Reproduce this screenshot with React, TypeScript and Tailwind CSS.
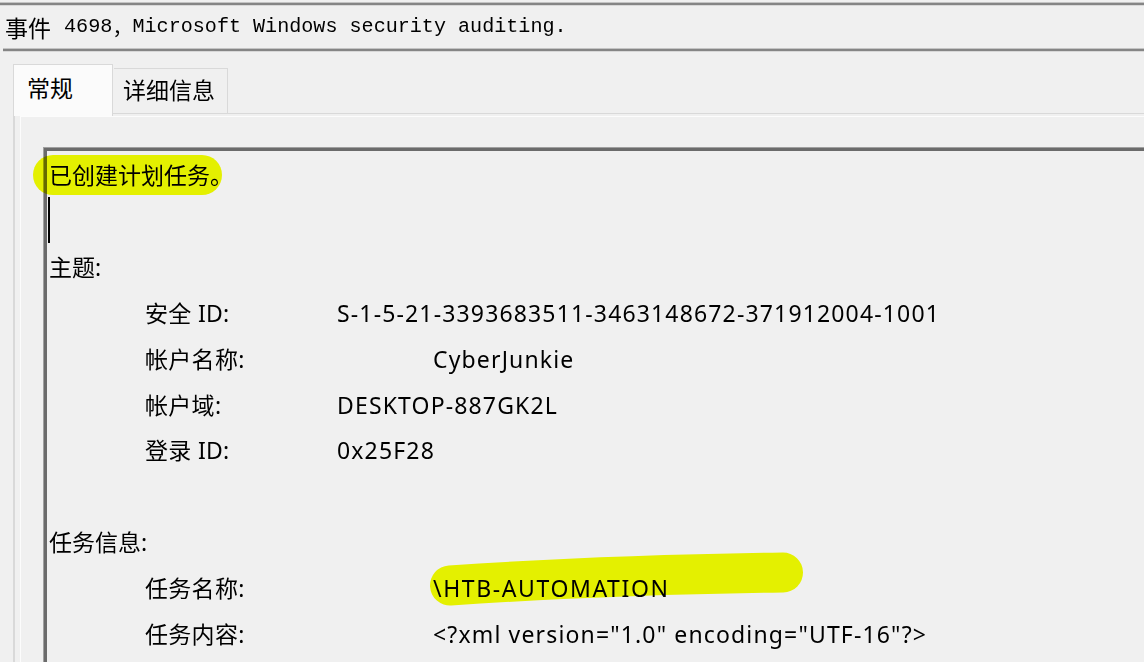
import React from "react";

const sans = { fontFamily: '"Noto Sans", "Noto Sans CJK SC", sans-serif' };

function Row({
  label,
  value,
  far,
  track = "tracking-[1.15px]",
}: {
  label: string;
  value: string;
  far?: boolean;
  track?: string;
}) {
  return (
    <div className="flex">
      <div className="w-[96px] shrink-0" />
      <div className="w-[192px] shrink-0 whitespace-nowrap tracking-[0.3px]">{label}</div>
      {far && <div className="w-[96px] shrink-0" />}
      <div className={"whitespace-nowrap " + track}>{value}</div>
    </div>
  );
}

export default function App() {
  return (
    <div
      className="relative w-[1144px] h-[662px] overflow-hidden bg-[#f0f0f0] text-black"
      style={sans}
    >
      {/* top separator */}
      <div className="mt-[2px] h-[1px] bg-[#c4c4c4]" />
      <div className="h-[2px] bg-[#858585]" />
      <div className="h-[1px] bg-[#d8d8d8]" />

      {/* title */}
      <div className="h-[42px] flex items-center pl-[5px] whitespace-nowrap">
        <span className="text-[23px] leading-none" style={{ fontFamily: '"Noto Sans CJK SC", sans-serif' }}>
          事件
        </span>
        <span
          className="text-[20.2px] leading-none ml-[13px]"
          style={{ fontFamily: '"Liberation Mono", monospace' }}
        >
          4698
        </span>
        <span className="text-[20px] leading-none w-[20px]" style={{ fontFamily: '"Noto Sans CJK SC", sans-serif' }}>
          ，
        </span>
        <span
          className="text-[20.1px] leading-none"
          style={{ fontFamily: '"Liberation Mono", monospace' }}
        >
          Microsoft Windows security auditing.
        </span>
      </div>

      {/* second separator */}
      <div className="ml-[3px] h-[1px] bg-[#c4c4c4]" />
      <div className="ml-[3px] h-[2px] bg-[#858585]" />
      <div className="ml-[3px] h-[1px] bg-[#d8d8d8]" />

      {/* tabs */}
      <div className="mt-[12px] ml-[13px] flex items-end h-[49px] text-[23px]">
        <div className="relative z-10 w-[100px] h-[52px] -mb-[3px] bg-[#fbfbfb] border-l border-t border-r border-[#d9d9d9] pl-[13px] pt-[6px] leading-[34px]">
          常规
        </div>
        <div className="w-[114px] h-[45px] ml-[1px] bg-[#f0f0f0] border-t border-r border-[#d9d9d9] pl-[9px] pt-[4px] leading-[34px]">
          详细信息
        </div>
      </div>

      {/* page */}
      <div className="ml-[13px] h-[600px] border-l-2 border-t border-[#d9d9d9] bg-[#f0f0f0]">
        <div className="ml-[5px] mt-[2px] h-full border-l border-t border-[#fcfcfc] pl-[22px] pt-[30px]">
          <div className="h-full border-l border-t border-[#a0a0a0]">
            <div className="h-full border-l-[3px] border-t-[3px] border-[#6b6b6b] pl-[2px] pt-[2px] text-[23px] leading-[45.9px] relative">
              <div className="whitespace-nowrap">已创建计划任务。</div>
              <div className="h-[45.9px] relative">
                <div className="absolute left-[-1px] top-[-2px] w-[2px] h-[46px] bg-black" />
              </div>
              <div>主题:</div>
              <Row label="安全 ID:" value="S-1-5-21-3393683511-3463148672-371912004-1001" />
              <Row label="帐户名称:" value="CyberJunkie" far />
              <Row label="帐户域:" value="DESKTOP-887GK2L" />
              <Row label="登录 ID:" value="0x25F28" />
              <div className="h-[45.9px]" />
              <div>任务信息:</div>
              <Row label="任务名称:" value="\HTB-AUTOMATION" far track="tracking-[1.6px]" />
              <Row label="任务内容:" value={'<?xml version="1.0" encoding="UTF-16"?>'} far />
            </div>
          </div>
        </div>
      </div>

      {/* highlighter marks */}
      <svg
        className="absolute left-0 top-0 pointer-events-none mix-blend-multiply"
        width="1144"
        height="662"
      >
        <rect x="33" y="155" width="189" height="40" rx="20" fill="#f3ff00" />
        <path d="M450 585.5 C 560 578, 680 574, 783 572.5" stroke="#f3ff00" strokeWidth="40" strokeLinecap="round" fill="none" />
      </svg>
    </div>
  );
}
